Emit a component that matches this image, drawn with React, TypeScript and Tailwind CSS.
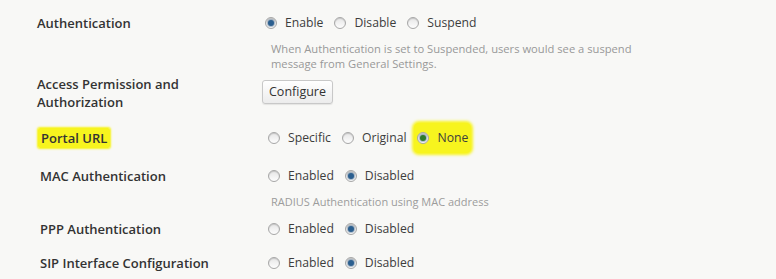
function Radio({ checked = false, label, hl = false }: { checked?: boolean; label: string; hl?: boolean }) {
  return (
    <span
      className={`inline-flex items-center gap-[8px] ${
        hl ? "-mx-[3px] -my-[5px] rounded-[5px] bg-[#f7f41e] px-[3px] py-[5px] shadow-[0_0_3px_2px_#f7f41e]" : ""
      }`}
    >
      <span className="relative inline-block h-[12px] w-[12px] rounded-full border border-[#a7a7a7] bg-gradient-to-b from-[#e6e6e6] to-[#fdfdfd] shadow-[inset_0_1px_1px_rgba(0,0,0,0.15)]">
        {checked && (
          <span
            className={`absolute left-1/2 top-1/2 h-[6px] w-[6px] -translate-x-1/2 -translate-y-1/2 rounded-full ${
              hl ? "bg-[#2f7a2a]" : "bg-[#2b5f8f]"
            } shadow-[0_0_1px_1px_rgba(40,80,120,0.4)]`}
          />
        )}
      </span>
      <span>{label}</span>
    </span>
  );
}

function Row({
  label,
  children,
  className = "",
  inset = "pl-[37px]",
}: {
  label: React.ReactNode;
  children: React.ReactNode;
  className?: string;
  inset?: string;
}) {
  return (
    <div className={`flex ${className}`}>
      <div className={`w-[228px] shrink-0 ${inset} text-[13px] font-semibold leading-[20px] text-[#333]`}>{label}</div>
      <div className="flex-1">{children}</div>
    </div>
  );
}

export default function App() {
  return (
    <div
      className="h-[279px] w-[776px] overflow-hidden bg-[#f8f8f6] text-[12.2px] text-[#3d3d3d]"
      style={{ fontFamily: '"Open Sans", "Liberation Sans", sans-serif' }}
    >
      <div className="pt-[13px]">
        <Row label="Authentication">
          <div className="flex gap-[11px] pl-[37px] leading-[20px]">
            <Radio checked label="Enable" />
            <Radio label="Disable" />
            <Radio label="Suspend" />
          </div>
          <p className="mt-[8px] w-[430px] pl-[43px] text-[11.2px] leading-[15px] text-[#999]">
            When Authentication is set to Suspended, users would see a suspend message from General Settings.
          </p>
        </Row>

        <Row
          className="mt-[4px]"
          label={<span className="block leading-[18px]">Access Permission and<br />Authorization</span>}
        >
          <button className="ml-[34px] mt-[5px] h-[24px] rounded-[3px] border border-[#c8c8c8] bg-gradient-to-b from-white to-[#ececec] px-[6px] text-[12.5px] text-[#333] shadow-[0_1px_1px_rgba(0,0,0,0.08)]">
            Configure
          </button>
        </Row>

        <Row
          className="mt-[17px]"
          inset="pl-[38px]"
          label={<span className="rounded-[2px] bg-[#f7f41e] px-[3px] py-[1px] shadow-[0_0_2px_1px_#f7f41e]">Portal URL</span>}
        >
          <div className="flex items-center gap-[11px] pl-[40px] leading-[20px]">
            <Radio label="Specific" />
            <Radio label="Original" />
            <Radio checked hl label="None" />
          </div>
        </Row>

        <Row className="mt-[18px]" inset="pl-[40px]" label="MAC Authentication">
          <div className="flex gap-[11px] pl-[40px] leading-[20px]">
            <Radio label="Enabled" />
            <Radio checked label="Disabled" />
          </div>
          <p className="mt-[8px] pl-[43px] text-[11px] leading-[15px] text-[#9c9c9c]">
            RADIUS Authentication using MAC address
          </p>
        </Row>

        <Row className="mt-[10px]" inset="pl-[40px]" label="PPP Authentication">
          <div className="flex gap-[11px] pl-[40px] leading-[20px]">
            <Radio label="Enabled" />
            <Radio checked label="Disabled" />
          </div>
        </Row>

        <Row className="mt-[14px]" inset="pl-[40px]" label="SIP Interface Configuration">
          <div className="flex gap-[11px] pl-[40px] leading-[20px]">
            <Radio label="Enabled" />
            <Radio checked label="Disabled" />
          </div>
        </Row>
      </div>
    </div>
  );
}
